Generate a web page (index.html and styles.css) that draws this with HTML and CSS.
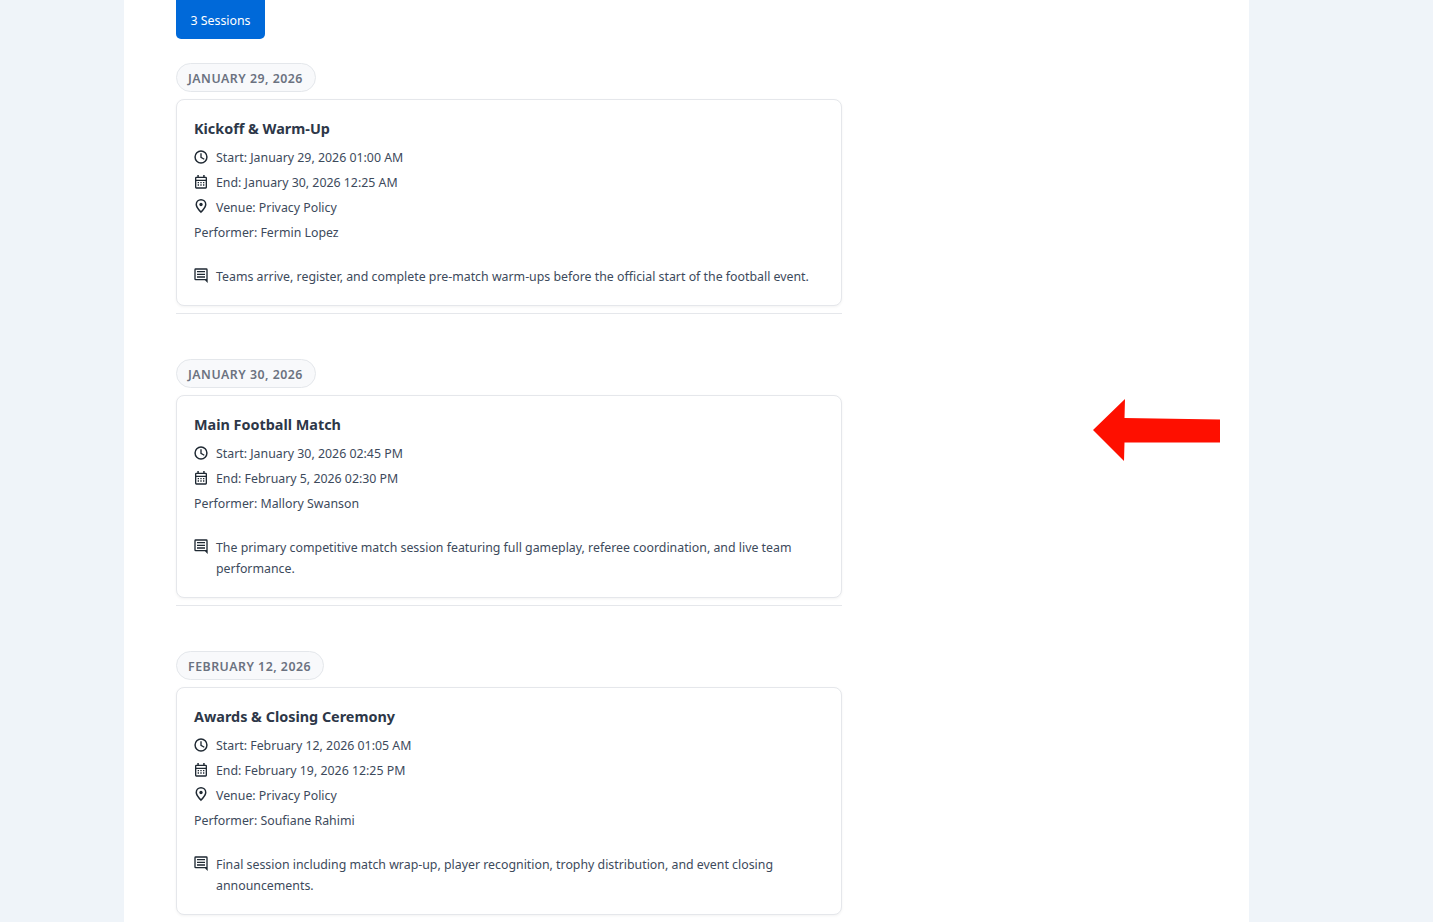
FILE: index.html
```html
<!DOCTYPE html>
<html lang="en">
<head>
  <meta charset="UTF-8">
  <title>Sessions</title>
  <link rel="stylesheet" href="styles.css">
</head>
<body>

  <svg class="icon-defs" width="0" height="0">
    <symbol id="i-clock" viewBox="0 0 24 24">
      <path d="M12 2a10 10 0 1 0 0 20 10 10 0 0 0 0-20zm0 17.800a7.800 7.800 0 1 1 0-15.600 7.800 7.800 0 0 1 0 15.600z"/>
      <path d="M13 6.500h-2V13l5.400 3.200 1-1.700-4.400-2.600z"/>
    </symbol>
    <symbol id="i-cal" viewBox="0 0 24 24">
      <path d="M6.500 1.500h2.200V4h6.600V1.500h2.200V4H19a2 2 0 0 1 2 2v14a2 2 0 0 1-2 2H5a2 2 0 0 1-2-2V6a2 2 0 0 1 2-2h1.500zM5 6v2.500h14V6zm0 4.500V20h14v-9.500z"/>
      <path d="M7 12h2v2H7zm4 0h2v2h-2zm4 0h2v2h-2zm-8 3.500h2v2H7zm4 0h2v2h-2zm4 0h2v2h-2z"/>
    </symbol>
    <symbol id="i-pin" viewBox="0 0 24 24">
      <path d="M12 0a8.200 8.200 0 0 0-8.200 8.200c0 5.500 8.200 13 8.200 13s8.200-7.500 8.200-13A8.200 8.200 0 0 0 12 0zm0 18c-2.600-2.800-6-6.800-6-9.800a6 6 0 1 1 12 0c0 3-3.400 7-6 9.800z"/>
      <circle cx="12" cy="8.200" r="2.500"/>
    </symbol>
    <symbol id="i-note" viewBox="0 0 24 24">
      <path d="M20 2H4a2 2 0 0 0-2 2v14a2 2 0 0 0 2 2h14l4 4V4a2 2 0 0 0-2-2zm0 16.500V18H4V4h16z"/>
      <path d="M6 6h12v2H6zm0 4h12v2H6zm0 4h12v2H6z"/>
    </symbol>
  </svg>

  <div class="page">
    <main class="sheet">
      <div class="sessions-count">3 Sessions</div>

      <section class="day">
        <div class="date-pill">JANUARY 29, 2026</div>
        <article class="session-card">
          <h3>Kickoff &amp; Warm-Up</h3>
          <div class="meta"><svg class="icon"><use href="#i-clock"/></svg>Start: January 29, 2026 01:00 AM</div>
          <div class="meta"><svg class="icon"><use href="#i-cal"/></svg>End: January 30, 2026 12:25 AM</div>
          <div class="meta"><svg class="icon"><use href="#i-pin"/></svg>Venue: Privacy Policy</div>
          <div class="meta">Performer: Fermin Lopez</div>
          <div class="desc"><svg class="icon"><use href="#i-note"/></svg><p>Teams arrive, register, and complete pre-match warm-ups before the official start of the football event.</p></div>
        </article>
      </section>

      <section class="day">
        <div class="date-pill">JANUARY 30, 2026</div>
        <article class="session-card">
          <h3>Main Football Match</h3>
          <div class="meta"><svg class="icon"><use href="#i-clock"/></svg>Start: January 30, 2026 02:45 PM</div>
          <div class="meta"><svg class="icon"><use href="#i-cal"/></svg>End: February 5, 2026 02:30 PM</div>
          <div class="meta">Performer: Mallory Swanson</div>
          <div class="desc"><svg class="icon"><use href="#i-note"/></svg><p>The primary competitive match session featuring full gameplay, referee coordination, and live team performance.</p></div>
        </article>
      </section>

      <section class="day">
        <div class="date-pill">FEBRUARY 12, 2026</div>
        <article class="session-card">
          <h3>Awards &amp; Closing Ceremony</h3>
          <div class="meta"><svg class="icon"><use href="#i-clock"/></svg>Start: February 12, 2026 01:05 AM</div>
          <div class="meta"><svg class="icon"><use href="#i-cal"/></svg>End: February 19, 2026 12:25 PM</div>
          <div class="meta"><svg class="icon"><use href="#i-pin"/></svg>Venue: Privacy Policy</div>
          <div class="meta">Performer: Soufiane Rahimi</div>
          <div class="desc"><svg class="icon"><use href="#i-note"/></svg><p>Final session including match wrap-up, player recognition, trophy distribution, and event closing announcements.</p></div>
        </article>
      </section>
    </main>
  </div>

  <svg class="red-arrow" width="130" height="66" viewBox="0 0 130 66">
    <path d="M1 32 L33 1 L32.500 20 L128 21.500 L128 44.500 L32.500 44.500 L32 63 Z" fill="#fe0f00"/>
  </svg>

</body>
</html>
```

FILE: styles.css
```css
* {
  box-sizing: border-box;
}

html, body {
  height: 100%;
}

body {
  margin: 0;
  background: #eff4f9;
  font-family: "Noto Sans", "Open Sans", sans-serif;
  color: #3d4a5c;
  overflow: hidden;
}

.icon-defs {
  position: absolute;
}

.page {
  width: 1125px;
  height: 100%;
  margin-left: 124px;
  background: #fff;
}

.sheet {
  width: 718px;
  padding-left: 52px;
}

.sessions-count {
  display: inline-block;
  height: 39px;
  padding: 0 14.5px;
  background: #0069d9;
  border-radius: 0 0 5px 5px;
  color: #fff;
  font-size: 12.35px;
  line-height: 41px;
  vertical-align: top;
}

.day {
  margin-bottom: 45px;
  padding-bottom: 7px;
  border-bottom: 1px solid #e5e7eb;
}

.day:first-of-type {
  margin-top: 24px;
}

.date-pill {
  display: inline-block;
  height: 29px;
  padding: 0 12px 0 11px;
  background: #f8f9fb;
  border: 1px solid #e4e7eb;
  border-radius: 15px;
  color: #6b7280;
  font-size: 12.35px;
  font-weight: 600;
  letter-spacing: 0.5px;
  line-height: 29px;
  vertical-align: top;
}

.session-card {
  margin-top: 7px;
  padding: 17px 17px 18.5px;
  background: #fff;
  border: 1px solid #e5e7eb;
  border-radius: 8px;
  box-shadow: 0 1px 3px rgba(0, 0, 0, 0.05);
}

.session-card h3 {
  margin: 0 0 3.5px;
  color: #2d3748;
  font-size: 14.4px;
  font-weight: 700;
  line-height: 24px;
}

.meta {
  display: flex;
  align-items: center;
  height: 25px;
  font-size: 12.35px;
}

.icon {
  flex: none;
  width: 16px;
  height: 16px;
  margin: 0 7.5px 0 -1.5px;
  fill: #1f2933;
}

.desc {
  display: flex;
  margin-top: 21px;
  font-size: 12.35px;
  line-height: 21px;
}

.desc .icon {
  margin-top: 1px;
}

.desc p {
  margin: 0;
}

.red-arrow {
  position: absolute;
  left: 1092px;
  top: 398px;
}
```
